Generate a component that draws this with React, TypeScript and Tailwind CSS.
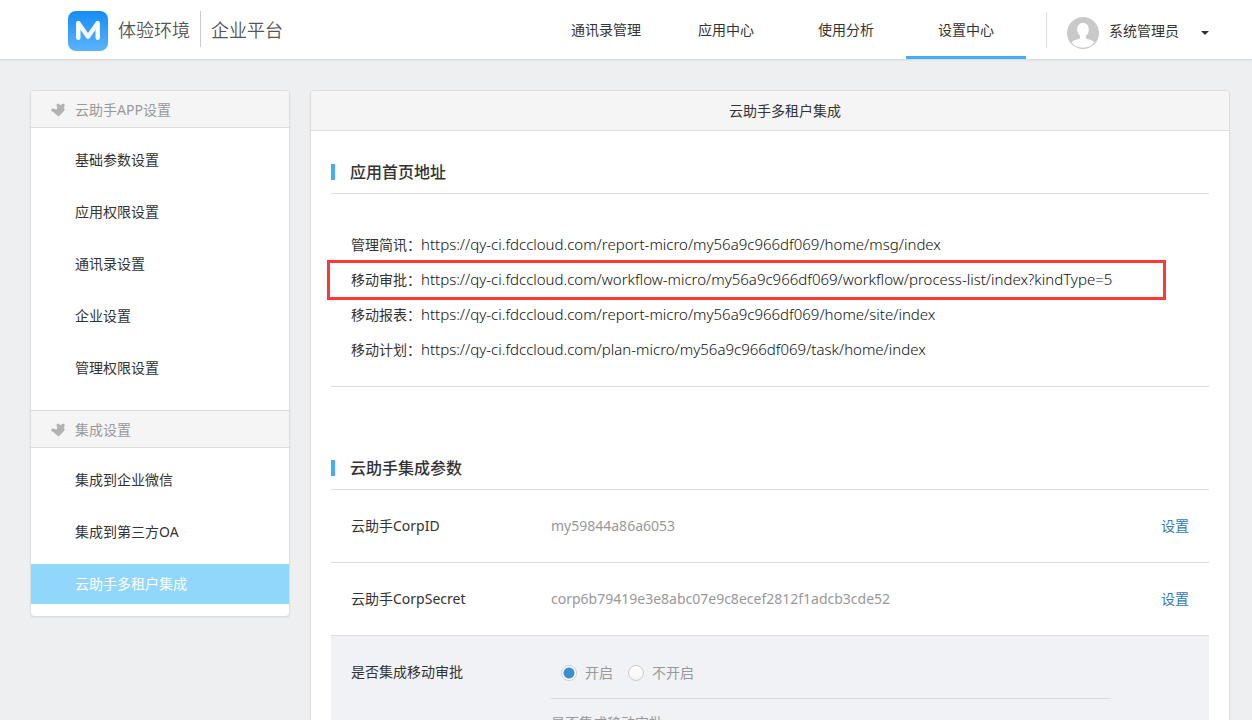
import React from 'react';

const NAV_ITEMS = ['通讯录管理', '应用中心', '使用分析', '设置中心'];
const ACTIVE_NAV = '设置中心';

const MENU_GROUPS = [
  {
    title: '云助手APP设置',
    items: ['基础参数设置', '应用权限设置', '通讯录设置', '企业设置', '管理权限设置'],
  },
  {
    title: '集成设置',
    items: ['集成到企业微信', '集成到第三方OA', '云助手多租户集成'],
  },
];
const ACTIVE_MENU = '云助手多租户集成';

const HOME_URLS = [
  { label: '管理简讯', url: 'https://qy-ci.fdccloud.com/report-micro/my56a9c966df069/home/msg/index' },
  {
    label: '移动审批',
    url: 'https://qy-ci.fdccloud.com/workflow-micro/my56a9c966df069/workflow/process-list/index?kindType=5',
    marked: true,
  },
  { label: '移动报表', url: 'https://qy-ci.fdccloud.com/report-micro/my56a9c966df069/home/site/index' },
  { label: '移动计划', url: 'https://qy-ci.fdccloud.com/plan-micro/my56a9c966df069/task/home/index' },
];

const CORP_PARAMS = [
  { label: '云助手CorpID', value: 'my59844a86a6053' },
  { label: '云助手CorpSecret', value: 'corp6b79419e3e8abc07e9c8ecef2812f1adcb3cde52' },
];

function Logo() {
  return (
    <svg className="h-10 w-10 shrink-0" viewBox="0 0 40 40" aria-hidden="true">
      <defs>
        <linearGradient id="logo-bg" x1="0" y1="0" x2="0" y2="1">
          <stop offset="0" stopColor="#168cf2" />
          <stop offset="1" stopColor="#5cb3ff" />
        </linearGradient>
      </defs>
      <rect width="40" height="40" rx="8" fill="url(#logo-bg)" />
      <g fill="none" stroke="#fff" strokeWidth="4.400" strokeLinecap="round" strokeLinejoin="round">
        <path d="M10.300 12.300V26.800M29.700 12.300V26.800" />
        <path d="M10.600 12.500L20 25.800L29.400 12.500" stroke="#f3f7fb" />
      </g>
    </svg>
  );
}

function Avatar() {
  return (
    <svg className="h-8 w-8 shrink-0" viewBox="0 0 32 32" aria-hidden="true">
      <circle cx="16" cy="16" r="16" fill="#c9c9c9" />
      <path
        d="M16 6c-3.700 0-5.800 2.600-5.800 6.200 0 2.700 1.100 5 2.800 6.300v2c0 1-1.200 1.600-3 2.100-2.700.8-4.600 1.700-5.400 3A15 15 0 0 0 16 30.800a15 15 0 0 0 11.400-5.200c-.8-1.300-2.700-2.200-5.400-3-1.800-.5-3-1.100-3-2.100v-2c1.700-1.300 2.800-3.600 2.800-6.300C21.800 8.600 19.700 6 16 6z"
        fill="#fff"
      />
    </svg>
  );
}

function GroupIcon() {
  return (
    <svg className="h-3.5 w-3.5 shrink-0" viewBox="0 0 14 14" aria-hidden="true">
      <path
        d="M5.500 1.800C5.500.4 8.200.2 8.700 1.500c.3.800.9.900 1.500.2C11.300.1 14 .6 13.700 2.400c-.1.900-.9 1.200-.7 1.900.5 1 .7 2.500.2 3.500L8.200 12.900c-.5.500-.9.500-1.400 0L3.200 9.700C2.400 9 .3 8.800.2 7.100.2 5.500 2 5.100 2.900 5.800c.8.600 2.900.7 3.300-.3.300-.9-.7-2.300-.7-3.700z"
        fill="#b3b3b3"
      />
    </svg>
  );
}

function Header() {
  return (
    <header className="relative flex h-[60px] items-start border-b border-[#d9dadc] bg-white pl-[68px] pr-[43px] shadow-xs">
      <div className="flex items-center pt-[11px] text-lg font-[350] text-[#555]">
        <Logo />
        <span className="mb-0.5 ml-2.5">体验环境</span>
        <span className="mx-2.5 mb-1 h-9 w-px bg-[#ccc]" />
        <span className="mb-0.5">企业平台</span>
      </div>

      <nav className="ml-auto flex">
        {NAV_ITEMS.map((item) => (
          <a
            key={item}
            href="#"
            className={
              item === ACTIVE_NAV
                ? 'h-[59px] w-[120px] border-b-3 border-[#44abfe] text-center leading-[60px]'
                : 'h-[59px] w-[120px] text-center leading-[60px]'
            }
          >
            {item}
          </a>
        ))}
      </nav>

      <button className="ml-5 mt-3 flex h-9 items-start border-l border-[#ddd] pl-5 text-left">
        <span className="flex items-center gap-2.5 pt-[5px]">
          <Avatar />
          <span className="pb-1">系统管理员</span>
          <span className="ml-3 border-x-4 border-t-4 border-x-transparent border-t-[#333]" />
        </span>
      </button>
    </header>
  );
}

function Sidebar() {
  return (
    <aside className="w-[260px] shrink-0 overflow-hidden rounded border border-[#ddd] bg-white shadow-xs">
      {MENU_GROUPS.map((group, index) => (
        <section key={group.title} className={index > 0 ? 'mt-2.5 border-t border-[#ddd]' : ''}>
          <h2 className="flex h-[37px] items-center gap-2.5 border-b border-[#ddd] bg-[#f5f5f5] pl-5 pt-0.5 text-[#999]">
            <GroupIcon />
            {group.title}
          </h2>
          <ul className="flex flex-col gap-3 py-3">
            {group.items.map((item) => (
              <li key={item}>
                <a
                  href="#"
                  className={
                    item === ACTIVE_MENU
                      ? 'block bg-[#91d7fb] pl-11 leading-10 text-white'
                      : 'block pl-11 leading-10'
                  }
                >
                  {item}
                </a>
              </li>
            ))}
          </ul>
        </section>
      ))}
    </aside>
  );
}

function SectionTitle({ children }: { children: React.ReactNode }) {
  return (
    <h2 className="flex h-[43px] items-center border-b border-[#ddd] text-base font-medium">
      <span className="mr-[15px] h-4 w-1 bg-[#44abfe]" />
      {children}
    </h2>
  );
}

function Radio({ label, defaultChecked }: { label: string; defaultChecked?: boolean }) {
  return (
    <label className="flex items-center gap-2">
      <input
        type="radio"
        name="approval"
        defaultChecked={defaultChecked}
        className="h-4 w-4 appearance-none rounded-full border border-[#ccc] bg-linear-to-b from-white to-[#f4f4f4] checked:bg-[radial-gradient(circle,#3a8fd3_5px,#fff_6px)]"
      />
      {label}
    </label>
  );
}

export default function App() {
  return (
    <div className="h-screen overflow-y-auto bg-[#eeeff1] font-['Noto_Sans','Noto_Sans_CJK_SC',sans-serif] text-sm text-[#333] [scrollbar-width:none]">
      <Header />

      <div className="flex items-start gap-5 pb-[30px] pl-[30px] pr-[22px] pt-[30px]">
        <Sidebar />

        <main className="min-w-0 flex-1 rounded border border-[#ddd] bg-white shadow-xs">
          <h1 className="h-10 rounded-t border-b border-[#ddd] bg-[#f5f5f5] pl-[30px] text-center leading-10">
            云助手多租户集成
          </h1>

          <div className="p-5">
            <SectionTitle>应用首页地址</SectionTitle>
            <ul className="border-b border-[#ddd] pb-[19px] pl-5 pt-[33px]">
              {HOME_URLS.map((item) => (
                <li key={item.label} className="relative h-[35px] leading-[35px]">
                  {item.label}：<span className="text-[15px] font-light text-[#111]">{item.url}</span>
                  {item.marked && (
                    <span className="absolute -left-6 -top-0.5 h-10 w-[839px] border-3 border-[#fe3737]" />
                  )}
                </li>
              ))}
            </ul>

            <div className="mt-[60px]">
              <SectionTitle>云助手集成参数</SectionTitle>
              {CORP_PARAMS.map((param) => (
                <div key={param.label} className="flex h-[73px] items-center border-b border-[#ddd] px-5">
                  <span className="w-[200px]">{param.label}</span>
                  <span className="flex-1 text-[#999]">{param.value}</span>
                  <a href="#" className="text-[#337ab7]">设置</a>
                </div>
              ))}

              <div className="flex bg-[#f0f2f6] px-5">
                <span className="w-[200px] leading-[72px]">是否集成移动审批</span>
                <div className="mr-[78px] flex-1 text-[#999]">
                  <div className="flex h-[63px] items-center gap-[15px] border-b border-[#d9dade] pl-2.5 pt-3">
                    <Radio label="开启" defaultChecked />
                    <Radio label="不开启" />
                  </div>
                  <p className="py-3.5">是否集成移动审批</p>
                </div>
              </div>
            </div>
          </div>
        </main>
      </div>
    </div>
  );
}
